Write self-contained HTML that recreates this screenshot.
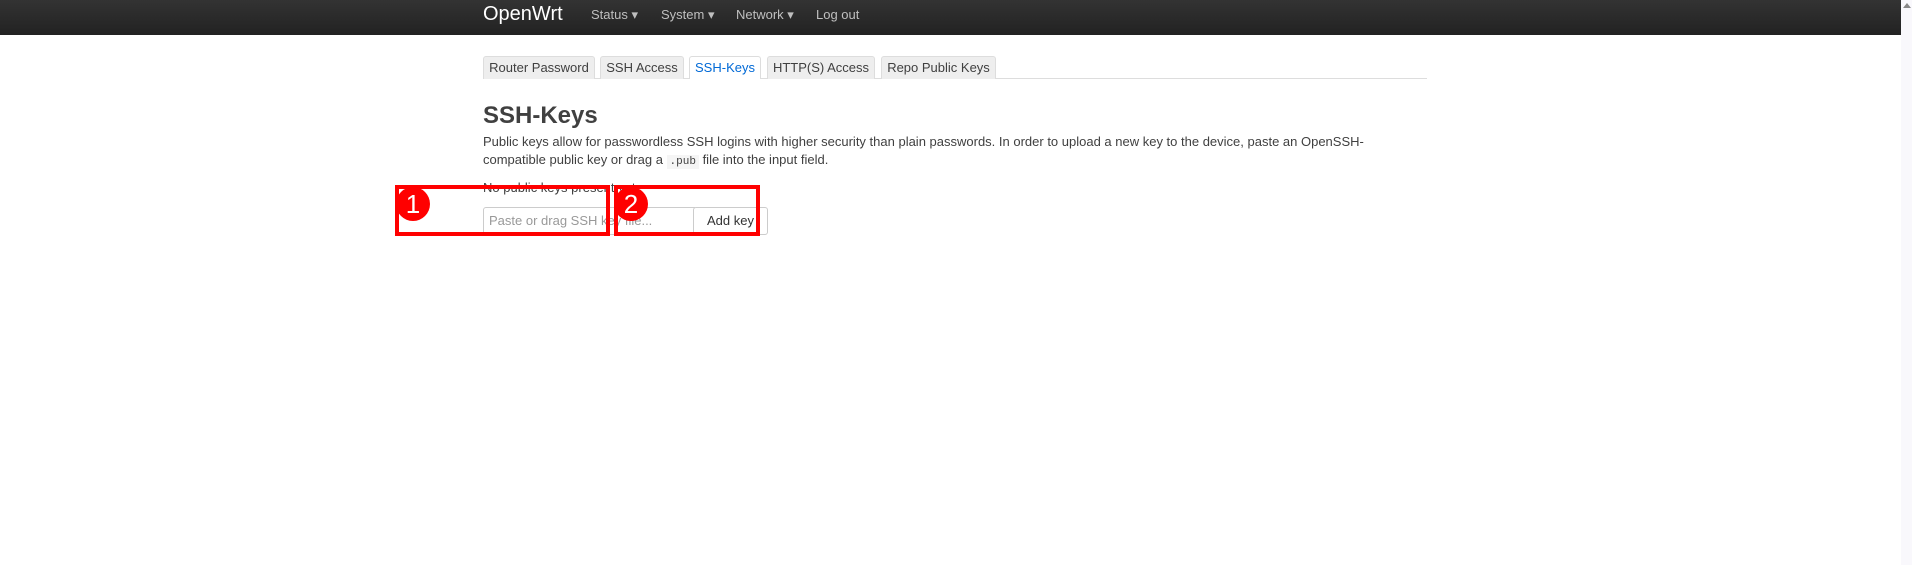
<!DOCTYPE html>
<html><head><meta charset="utf-8"><style>
*{box-sizing:border-box}
body{margin:0;width:1912px;height:565px;background:#fff;font-family:"Liberation Sans",sans-serif;position:relative;overflow:hidden;color:#404040}
.nav{position:absolute;left:0;top:0;width:1901px;height:35px;background:linear-gradient(#333,#222)}
.nav span{position:absolute;top:0;line-height:30px;color:#bfbfbf;font-size:13px}
.brand{color:#fff!important;font-size:20px!important;line-height:28px!important}
.sb{position:absolute;left:1901px;top:0;width:11px;height:565px;background:#f9f8fc}
.tri{position:absolute;left:1903px;top:3px;width:0;height:0;border-left:4px solid transparent;border-right:4px solid transparent;border-bottom:5px solid #888}
.line{position:absolute;left:483px;top:78px;width:944px;height:1px;background:#ddd}
.tab{position:absolute;top:56px;height:23px;border:1px solid #ddd;border-bottom:none;background:#eee;font-size:13px;line-height:22px;text-align:center;color:#404040;border-radius:3px 3px 0 0}
.tab.a{background:#fff;color:#0069d6}
h2{position:absolute;left:483px;top:102px;margin:0;font-size:24px;font-weight:bold;color:#404040}
p{position:absolute;left:483px;margin:0;font-size:13px;line-height:18px;color:#404040}
code{font-family:"Liberation Mono",monospace;font-size:11px;background:#f5f5f5;padding:1px 3px}
.in{position:absolute;top:207px;height:28px;border:1px solid #ccc;font-size:13px;line-height:26px;padding-left:5px;color:#999}
.btn{position:absolute;left:693px;top:207px;width:75px;height:28px;border:1px solid #ccc;border-radius:3px;font-size:13px;line-height:26px;text-align:center;color:#333;background:#fff}
.box{position:absolute;border:4px solid #f00}
.num{position:absolute;width:34px;height:34px;border-radius:50%;background:#f00;color:#fff;font-size:26px;line-height:34px;text-align:center}
</style></head><body>
<div class="nav">
<span class="brand" style="left:483px">OpenWrt</span>
<span style="left:591px">Status ▾</span>
<span style="left:661px">System ▾</span>
<span style="left:736px">Network ▾</span>
<span style="left:816px">Log out</span>
</div>
<div class="sb"></div><div class="tri"></div>
<div class="line"></div>
<div class="tab" style="left:483px;width:112px">Router Password</div>
<div class="tab" style="left:600px;width:84px">SSH Access</div>
<div class="tab a" style="left:689px;width:72px">SSH-Keys</div>
<div class="tab" style="left:767px;width:108px">HTTP(S) Access</div>
<div class="tab" style="left:881px;width:115px">Repo Public Keys</div>
<h2>SSH-Keys</h2>
<p style="top:133px">Public keys allow for passwordless SSH logins with higher security than plain passwords. In order to upload a new key to the device, paste an OpenSSH-<br>compatible public key or drag a <code>.pub</code> file into the input field.</p>
<p style="top:179px">No public keys present yet.</p>
<div class="in" style="left:483px;width:212px;border-radius:3px 0 0 3px">Paste or drag SSH key file...</div>
<div class="btn">Add key</div>
<div class="box" style="left:395px;top:185px;width:215px;height:51px"></div>
<div class="box" style="left:614px;top:185px;width:146px;height:51px"></div>
<div class="num" style="left:396px;top:187px">1</div>
<div class="num" style="left:614px;top:187px">2</div>
</body></html>
